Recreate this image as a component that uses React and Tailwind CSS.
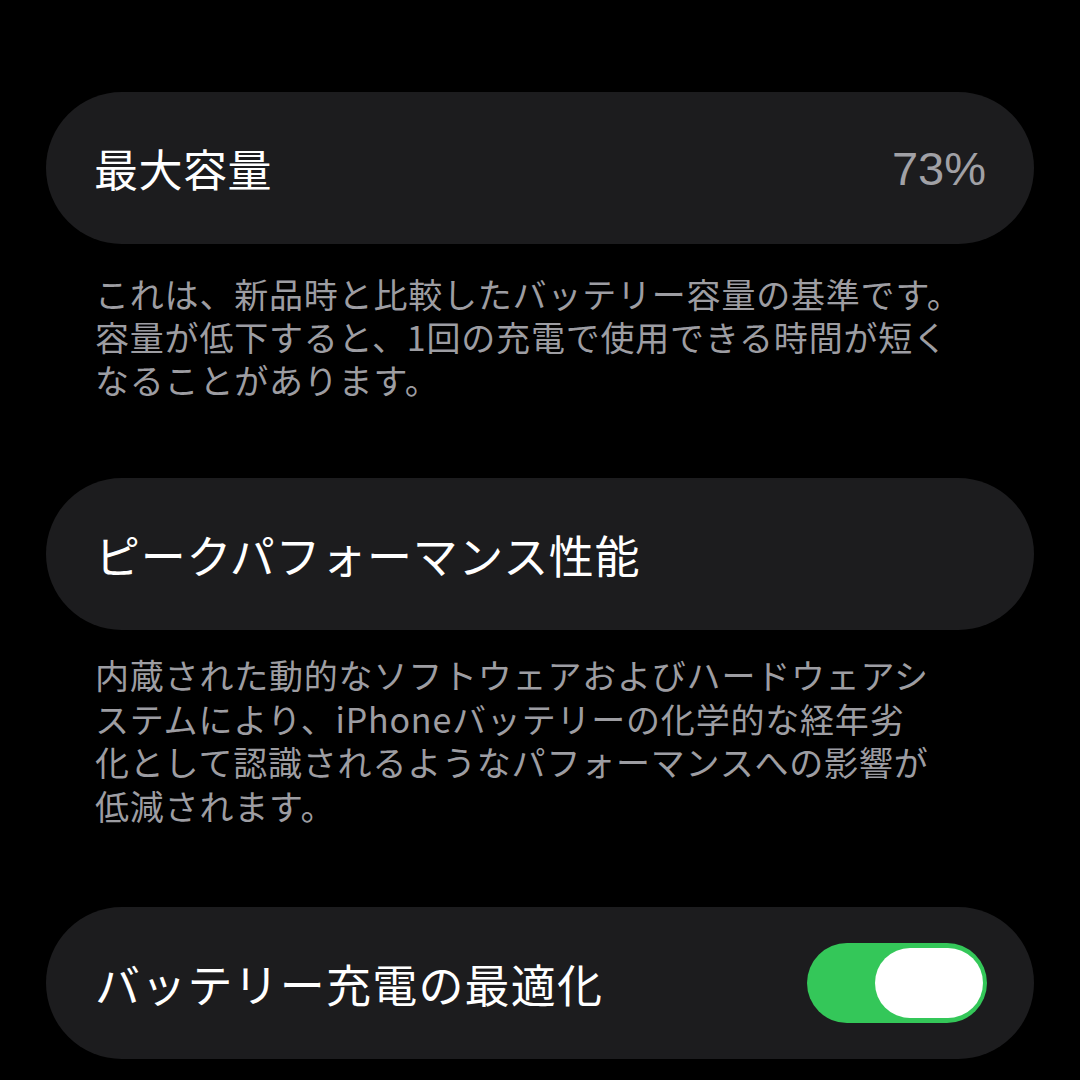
export default function App() {
  const jp = { fontFamily: '"Noto Sans CJK JP", "Noto Sans", sans-serif' };

  return (
    <div className="w-[1080px] h-[1080px] bg-black overflow-hidden" style={jp}>
      <div className="flex flex-col pt-[92px] pl-[46px]">
        <div className="w-[988px] h-[152px] rounded-[76px] bg-[#1c1c1e] flex items-center justify-between pl-[48px] pr-[48px]">
          <span className="text-[44px] text-white leading-none tracking-[0.5px]">最大容量</span>
          <span className="text-[47px] text-[#a1a1a6] leading-none" style={{ fontFamily: '"Liberation Sans", "Noto Sans", sans-serif' }}>
            73%
          </span>
        </div>

        <p className="mt-[28px] pl-[49px] text-[34px] leading-[43px] tracking-[0.8px] text-[#9d9da2] whitespace-nowrap">
          これは、新品時と比較したバッテリー容量の基準です。
          <br />
          容量が低下すると、1回の充電で使用できる時間が短く
          <br />
          なることがあります。
        </p>

        <div className="mt-[77px] w-[988px] h-[152px] rounded-[76px] bg-[#1c1c1e] flex items-center pl-[49px]">
          <span className="text-[45px] text-white leading-none tracking-[0.7px]">ピークパフォーマンス性能</span>
        </div>

        <p className="mt-[23px] pl-[49px] text-[34px] leading-[43.5px] tracking-[0.8px] text-[#9d9da2] whitespace-nowrap">
          内蔵された動的なソフトウェアおよびハードウェアシ
          <br />
          ステムにより、iPhoneバッテリーの化学的な経年劣
          <br />
          化として認識されるようなパフォーマンスへの影響が
          <br />
          低減されます。
        </p>

        <div className="mt-[80px] w-[988px] h-[152px] rounded-[76px] bg-[#1c1c1e] flex items-center justify-between pl-[49px] pr-[47px]">
          <span className="text-[45px] text-white leading-none tracking-[1.2px]">バッテリー充電の最適化</span>
          <div className="w-[180px] h-[80px] rounded-full bg-[#34c759] flex items-center justify-end pr-[4px]">
            <div className="w-[108px] h-[70px] rounded-full bg-white" />
          </div>
        </div>
      </div>
    </div>
  );
}
